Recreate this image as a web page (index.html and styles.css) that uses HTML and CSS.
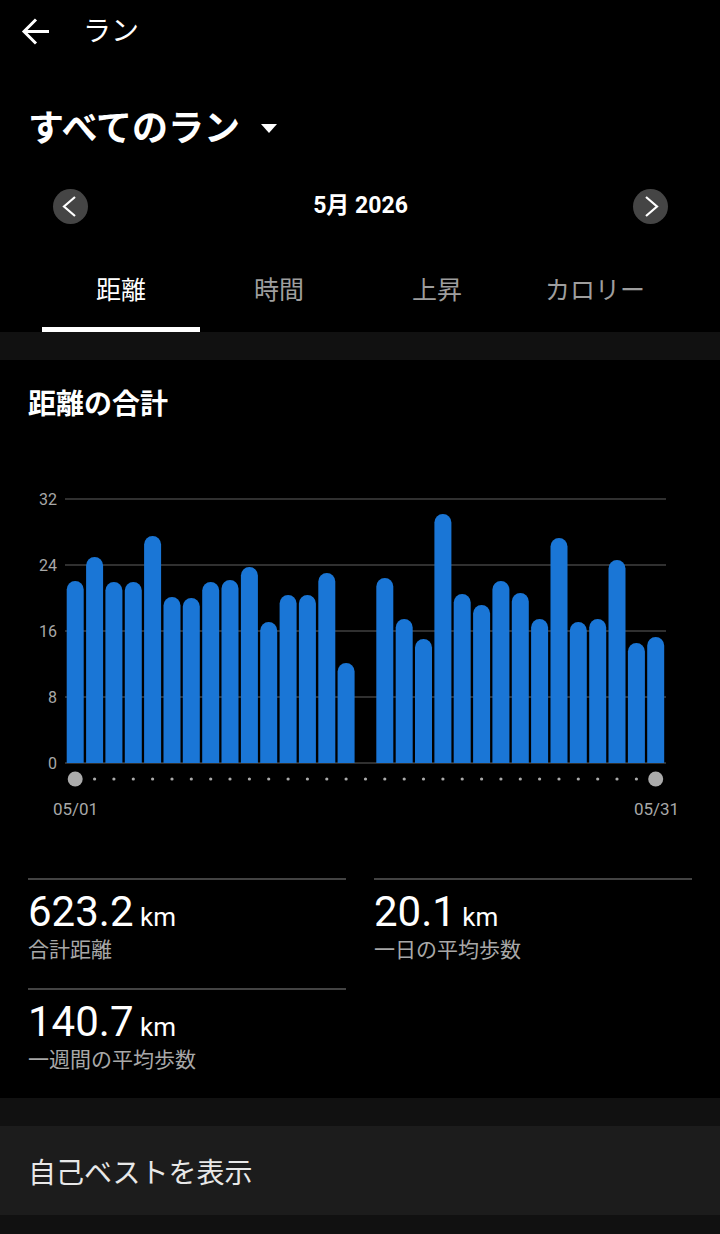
FILE: index.html
```html
<!DOCTYPE html>
<html lang="ja">
<head>
<meta charset="utf-8">
<title>ラン</title>
<link rel="stylesheet" href="styles.css">
</head>
<body>
<header class="head">
  <div class="topbar">
    <svg class="back" width="32" height="30" viewBox="0 0 32 30"><path d="M29 15.5H4M16 3.5L4 15.5L16 27.5" fill="none" stroke="#fff" stroke-width="3"/></svg>
    <span class="topbar-title">ラン</span>
  </div>
  <div class="title-row">
    <h1 class="title">すべてのラン</h1>
    <span class="caret"></span>
  </div>
  <div class="month-row">
    <span class="nav-btn"><svg width="35" height="35" viewBox="0 0 35 35"><path d="M22 8L11 17.5L22 27" fill="none" stroke="#fff" stroke-width="2.2"/></svg></span>
    <span class="month">5月 2026</span>
    <span class="nav-btn"><svg width="35" height="35" viewBox="0 0 35 35"><path d="M13 8L24 17.5L13 27" fill="none" stroke="#fff" stroke-width="2.2"/></svg></span>
  </div>
  <nav class="tabs">
    <div class="tab active"><span class="tab-label">距離</span><span class="tab-bar"></span></div>
    <div class="tab"><span class="tab-label">時間</span><span class="tab-bar"></span></div>
    <div class="tab"><span class="tab-label">上昇</span><span class="tab-bar"></span></div>
    <div class="tab"><span class="tab-label">カロリー</span><span class="tab-bar"></span></div>
  </nav>
</header>
<div class="spacer"></div>
<section class="card">
  <h2 class="card-title">距離の合計</h2>
  <svg class="chart" width="720" height="345" viewBox="0 0 720 345">
    <g stroke="#414141" stroke-width="1.5">
      <line x1="65" y1="19" x2="666" y2="19"/>
      <line x1="65" y1="85" x2="666" y2="85"/>
      <line x1="65" y1="151" x2="666" y2="151"/>
      <line x1="65" y1="217" x2="666" y2="217"/>
      <line x1="65" y1="283" x2="666" y2="283"/>
    </g>
    <g class="axis" text-anchor="end">
      <text x="57" y="25">32</text>
      <text x="57" y="91">24</text>
      <text x="57" y="157">16</text>
      <text x="57" y="223">8</text>
      <text x="57" y="289">0</text>
    </g>
    <g fill="#1a76d6">
      <path d="M66.7 283V109.5a8.5 8.5 0 0 1 17 0V283Z"/>
      <path d="M86.1 283V85.5a8.5 8.5 0 0 1 17 0V283Z"/>
      <path d="M105.4 283V110.5a8.5 8.5 0 0 1 17 0V283Z"/>
      <path d="M124.8 283V110.5a8.5 8.5 0 0 1 17 0V283Z"/>
      <path d="M144.1 283V64.5a8.5 8.5 0 0 1 17 0V283Z"/>
      <path d="M163.5 283V125.5a8.5 8.5 0 0 1 17 0V283Z"/>
      <path d="M182.8 283V126.5a8.5 8.5 0 0 1 17 0V283Z"/>
      <path d="M202.2 283V110.5a8.5 8.5 0 0 1 17 0V283Z"/>
      <path d="M221.5 283V108.5a8.5 8.5 0 0 1 17 0V283Z"/>
      <path d="M240.9 283V95.5a8.5 8.5 0 0 1 17 0V283Z"/>
      <path d="M260.2 283V150.5a8.5 8.5 0 0 1 17 0V283Z"/>
      <path d="M279.6 283V123.5a8.5 8.5 0 0 1 17 0V283Z"/>
      <path d="M298.9 283V123.5a8.5 8.5 0 0 1 17 0V283Z"/>
      <path d="M318.3 283V101.5a8.5 8.5 0 0 1 17 0V283Z"/>
      <path d="M337.6 283V191.5a8.5 8.5 0 0 1 17 0V283Z"/>
      <path d="M376.3 283V106.5a8.5 8.5 0 0 1 17 0V283Z"/>
      <path d="M395.7 283V147.5a8.5 8.5 0 0 1 17 0V283Z"/>
      <path d="M415 283V167.5a8.5 8.5 0 0 1 17 0V283Z"/>
      <path d="M434.4 283V42.5a8.5 8.5 0 0 1 17 0V283Z"/>
      <path d="M453.7 283V122.5a8.5 8.5 0 0 1 17 0V283Z"/>
      <path d="M473.1 283V133.5a8.5 8.5 0 0 1 17 0V283Z"/>
      <path d="M492.4 283V109.5a8.5 8.5 0 0 1 17 0V283Z"/>
      <path d="M511.8 283V121.5a8.5 8.5 0 0 1 17 0V283Z"/>
      <path d="M531.1 283V147.5a8.5 8.5 0 0 1 17 0V283Z"/>
      <path d="M550.5 283V66.5a8.5 8.5 0 0 1 17 0V283Z"/>
      <path d="M569.8 283V150.5a8.5 8.5 0 0 1 17 0V283Z"/>
      <path d="M589.2 283V147.5a8.5 8.5 0 0 1 17 0V283Z"/>
      <path d="M608.5 283V88.5a8.5 8.5 0 0 1 17 0V283Z"/>
      <path d="M627.9 283V171.5a8.5 8.5 0 0 1 17 0V283Z"/>
      <path d="M647.2 283V165.5a8.5 8.5 0 0 1 17 0V283Z"/>
    </g>
    <g fill="#ababab">
      <circle cx="75.2" cy="299" r="7.5"/>
      <circle cx="655.7" cy="299" r="7.5"/>
      <circle cx="94.6" cy="299" r="1.6"/><circle cx="113.9" cy="299" r="1.6"/><circle cx="133.3" cy="299" r="1.6"/><circle cx="152.6" cy="299" r="1.6"/><circle cx="172" cy="299" r="1.6"/><circle cx="191.3" cy="299" r="1.6"/><circle cx="210.7" cy="299" r="1.6"/><circle cx="230" cy="299" r="1.6"/><circle cx="249.4" cy="299" r="1.6"/><circle cx="268.7" cy="299" r="1.6"/><circle cx="288.1" cy="299" r="1.6"/><circle cx="307.4" cy="299" r="1.6"/><circle cx="326.8" cy="299" r="1.6"/><circle cx="346.1" cy="299" r="1.6"/><circle cx="365.5" cy="299" r="1.6"/><circle cx="384.8" cy="299" r="1.6"/><circle cx="404.2" cy="299" r="1.6"/><circle cx="423.5" cy="299" r="1.6"/><circle cx="442.9" cy="299" r="1.6"/><circle cx="462.2" cy="299" r="1.6"/><circle cx="481.6" cy="299" r="1.6"/><circle cx="500.9" cy="299" r="1.6"/><circle cx="520.3" cy="299" r="1.6"/><circle cx="539.6" cy="299" r="1.6"/><circle cx="559" cy="299" r="1.6"/><circle cx="578.3" cy="299" r="1.6"/><circle cx="597.7" cy="299" r="1.6"/><circle cx="617" cy="299" r="1.6"/><circle cx="636.4" cy="299" r="1.6"/>
    </g>
    <g class="dates" text-anchor="middle">
      <text x="75.5" y="335">05/01</text>
      <text x="656.5" y="335">05/31</text>
    </g>
  </svg>
  <div class="stats">
    <div class="stat"><div class="stat-value">623.2<span class="unit"> km</span></div><div class="stat-label">合計距離</div></div>
    <div class="stat"><div class="stat-value">20.1<span class="unit"> km</span></div><div class="stat-label">一日の平均歩数</div></div>
    <div class="stat"><div class="stat-value">140.7<span class="unit"> km</span></div><div class="stat-label">一週間の平均歩数</div></div>
  </div>
</section>
<div class="spacer"></div>
<div class="best-row">自己ベストを表示</div>
</body>
</html>
```
FILE: styles.css
```css
html, body {
  margin: 0;
  padding: 0;
}
body {
  background: #111111;
  color: #fff;
  font-family: Roboto, "Noto Sans CJK JP", sans-serif;
  width: 720px;
  min-height: 1234px;
}
.head {
  background: #000;
}
.topbar {
  height: 60px;
  display: flex;
  align-items: center;
  padding-left: 20px;
}
.back {
  display: block;
  margin-top: 1px;
}
.topbar-title {
  font-family: "Noto Sans CJK JP", sans-serif;
  font-size: 28px;
  line-height: 34px;
  margin-left: 31px;
  margin-top: -2px;
}
.title-row {
  margin-top: 34px;
  height: 62px;
  display: flex;
  align-items: center;
  padding-left: 28px;
}
.title {
  margin: 0;
  font-family: "Noto Sans CJK JP", sans-serif;
  font-size: 36px;
  line-height: 44px;
  font-weight: 700;
}
.caret {
  width: 0;
  height: 0;
  border-left: 8px solid transparent;
  border-right: 8px solid transparent;
  border-top: 9px solid #fff;
  margin-left: 21px;
  margin-top: 7px;
}
.month-row {
  margin-top: 32px;
  height: 36px;
  display: flex;
  align-items: center;
  justify-content: space-between;
  padding: 0 52px 0 53px;
}
.nav-btn {
  width: 35px;
  height: 35px;
  border-radius: 50%;
  background: #454545;
  display: block;
}
.nav-btn svg {
  display: block;
}
.month {
  font-size: 23px;
  font-weight: 700;
  line-height: 28px;
}
.tabs {
  margin-top: 26px;
  display: flex;
  padding-left: 42px;
}
.tab {
  width: 158px;
  display: flex;
  flex-direction: column;
}
.tab-label {
  height: 76px;
  display: flex;
  align-items: center;
  justify-content: center;
  font-family: "Noto Sans CJK JP", sans-serif;
  font-size: 25px;
  color: #9e9e9e;
}
.tab-bar {
  height: 5px;
  margin-top: 1px;
}
.tab.active .tab-label {
  color: #fff;
}
.tab.active .tab-bar {
  background: #fff;
}
.spacer {
  height: 28px;
}
.card {
  background: #000;
  padding-top: 24px;
  padding-bottom: 26px;
}
.card-title {
  margin: 0;
  padding-left: 28px;
  font-family: "Noto Sans CJK JP", sans-serif;
  font-size: 28px;
  line-height: 36px;
  font-weight: 700;
}
.chart {
  display: block;
  margin-top: 60px;
}
.axis text {
  font-family: Roboto, sans-serif;
  font-size: 16px;
  fill: #a8a8a8;
}
.dates text {
  font-family: Roboto, sans-serif;
  font-size: 17px;
  fill: #a8a8a8;
}
.stats {
  margin-top: 53px;
  padding: 0 28px;
  display: grid;
  grid-template-columns: 1fr 1fr;
  column-gap: 28px;
  row-gap: 26px;
}
.stat {
  border-top: 2px solid #434343;
  padding-top: 10px;
}
.stat-value {
  font-family: Roboto, sans-serif;
  font-size: 42px;
  line-height: 44px;
  height: 44px;
  color: #fff;
}
.unit {
  font-size: 26px;
  line-height: 26px;
}
.stat-label {
  font-family: "Noto Sans CJK JP", sans-serif;
  font-size: 21px;
  line-height: 28px;
  height: 28px;
  color: #a8a8a8;
}
.best-row {
  background: #1c1c1c;
  height: 89px;
  display: flex;
  align-items: center;
  padding-left: 28px;
  font-family: "Noto Sans CJK JP", sans-serif;
  font-size: 28px;
  color: #e8e8e8;
}
```
